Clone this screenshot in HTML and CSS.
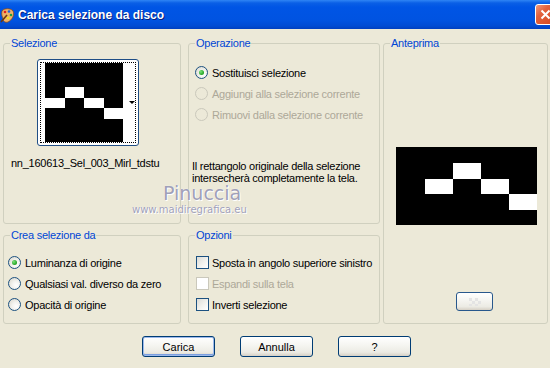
FILE: index.html
```html
<!DOCTYPE html>
<html lang="it">
<head>
  <meta charset="UTF-8">
  <title>Carica selezione da disco</title>
  <link rel="stylesheet" href="styles.css">
</head>
<body>
  <div class="window">
    <div class="titlebar">
      <svg class="app-icon" width="15" height="17" viewBox="0 0 15 17">
        <path d="M2 4 C4 1 11 1 13 4 C15 8 12 13 8 15 C5 16 3 14 3 12 C3 10 1 9 2 4 Z" fill="#f0b36a" stroke="#8a4a1a" stroke-width="0.8"/>
        <circle cx="5" cy="5" r="1.3" fill="#e02020"/>
        <circle cx="9" cy="4.5" r="1.3" fill="#2060e0"/>
        <circle cx="11" cy="8" r="1.3" fill="#20a040"/>
        <circle cx="8" cy="11" r="1.3" fill="#f0e020"/>
        <path d="M1 15 L7 8" stroke="#6a3a10" stroke-width="1.6"/>
      </svg>
      <span class="title">Carica selezione da disco</span>
      <span class="close">
        <svg width="11" height="11" viewBox="0 0 11 11"><path d="M1.5 1.5 L9.5 9.5 M9.5 1.5 L1.5 9.5" stroke="#fff" stroke-width="2"/></svg>
      </span>
    </div>

    <div class="groups">
      <!-- Selezione -->
      <fieldset class="group sel">
        <legend>Selezione</legend>
        <div class="thumb">
          <div class="focus">
            <svg width="78" height="79" viewBox="0 0 78 79">
              <rect width="78" height="79" fill="#000"/>
              <rect x="20" y="24" width="19" height="11" fill="#fff"/>
              <rect x="0" y="35" width="20" height="10" fill="#fff"/>
              <rect x="39" y="35" width="20" height="10" fill="#fff"/>
              <rect x="59" y="45" width="19" height="11" fill="#fff"/>
            </svg>
            <div class="strip"><span class="arrow"></span></div>
          </div>
        </div>
        <div class="filename">nn_160613_Sel_003_Mirl_tdstu</div>
      </fieldset>

      <!-- Operazione -->
      <fieldset class="group op">
        <legend>Operazione</legend>
        <div class="options">
          <div class="row"><span class="radio checked"></span>Sostituisci selezione</div>
          <div class="row disabled"><span class="radio"></span>Aggiungi alla selezione corrente</div>
          <div class="row disabled"><span class="radio"></span>Rimuovi dalla selezione corrente</div>
        </div>
        <p class="note">Il rettangolo originale della selezione intersecherà completamente la tela.</p>
      </fieldset>

      <!-- Anteprima -->
      <fieldset class="group preview">
        <legend>Anteprima</legend>
        <svg class="preview-img" width="141" height="78" viewBox="0 0 141 78">
          <rect width="141" height="78" fill="#000"/>
          <rect x="57" y="16" width="28" height="16" fill="#fff"/>
          <rect x="29" y="32" width="28" height="15" fill="#fff"/>
          <rect x="85" y="32" width="28" height="15" fill="#fff"/>
          <rect x="113" y="47" width="28" height="16" fill="#fff"/>
        </svg>
        <button class="btn small" type="button">
          <svg width="12" height="8" viewBox="0 0 12 8">
            <rect x="0" y="0" width="3" height="3" fill="#e4e4e4"/>
            <rect x="6" y="0" width="3" height="3" fill="#e4e4e4"/>
            <rect x="3" y="3" width="3" height="3" fill="#e4e4e4"/>
            <rect x="9" y="3" width="3" height="3" fill="#e4e4e4"/>
            <rect x="0" y="6" width="3" height="2" fill="#e4e4e4"/>
            <rect x="6" y="6" width="3" height="2" fill="#e4e4e4"/>
          </svg>
        </button>
      </fieldset>

      <!-- Crea selezione da -->
      <fieldset class="group crea">
        <legend>Crea selezione da</legend>
        <div class="options">
          <div class="row"><span class="radio checked"></span>Luminanza di origine</div>
          <div class="row"><span class="radio"></span>Qualsiasi val. diverso da zero</div>
          <div class="row"><span class="radio"></span>Opacità di origine</div>
        </div>
      </fieldset>

      <!-- Opzioni -->
      <fieldset class="group opz">
        <legend>Opzioni</legend>
        <div class="options">
          <div class="row"><span class="check"></span>Sposta in angolo superiore sinistro</div>
          <div class="row disabled"><span class="check"></span>Espandi sulla tela</div>
          <div class="row"><span class="check"></span>Inverti selezione</div>
        </div>
      </fieldset>
    </div>

    <div class="buttons">
      <button class="btn default" type="button">Carica</button>
      <button class="btn" type="button">Annulla</button>
      <button class="btn" type="button">?</button>
    </div>

    <div class="watermark">
      <div class="wm-name">Pinuccia</div>
      <div class="wm-url">www.maidiregrafica.eu</div>
    </div>
  </div>
</body>
</html>
```

FILE: styles.css
```css
body {
  margin: 0;
  padding: 0;
  background-color: #ece9d8;
}
.window {
  position: relative;
  width: 550px;
  height: 368px;
  overflow: hidden;
  background-color: #ece9d8;
  font-family: "Liberation Sans", Arial, sans-serif;
  font-size: 11px;
  letter-spacing: -0.25px;
  color: #000;
}

/* title bar */
.titlebar {
  height: 29px;
  display: flex;
  align-items: center;
  background: linear-gradient(#2f85f5 0, #0a5fe6 3px, #0055e5 7px, #0053e1 20px, #004bd3 26px, #003fbf 29px);
}
.app-icon {
  margin-top: 1px;
}
.title {
  margin-left: 3px;
  font-weight: bold;
  font-size: 12px;
  letter-spacing: 0;
  color: #fff;
  text-shadow: 1px 1px 0 #0a1d7a;
}
.close {
  margin-left: auto;
  margin-right: -6px;
  width: 19px;
  height: 19px;
  border: 1px solid #fff;
  border-radius: 3px;
  background: linear-gradient(135deg, #f19a7e 0, #e2613d 35%, #d3461f 100%);
  display: flex;
  align-items: center;
  justify-content: center;
}

/* group boxes */
.groups {
  display: grid;
  grid-template-columns: 178px 199px 168px;
  grid-template-rows: 187px 95px;
  row-gap: 5px;
  padding: 8px 0 0 3px;
}
.group {
  margin: 0;
  padding: 0;
  border: 1px solid #d0d0bf;
  border-radius: 3px;
  min-width: 0;
}
.group legend {
  margin-left: 6px;
  padding: 0 1px;
  line-height: 13px;
  color: #0046d5;
}
.op, .opz {
  margin-left: 7px;
}
.preview {
  grid-column: 3;
  grid-row: 1 / span 2;
  margin-left: 3px;
}
.crea {
  grid-column: 1;
  grid-row: 2;
}
.opz {
  grid-column: 2;
  grid-row: 2;
}

/* selezione */
.thumb {
  box-sizing: border-box;
  width: 102px;
  height: 87px;
  margin: 9px 0 0 33px;
  padding: 2px;
  border: 1px solid #1f4e85;
  border-radius: 3px;
  background-color: #fff;
}
.focus {
  box-sizing: border-box;
  height: 100%;
  border: 1px dotted #000;
  display: flex;
  padding-left: 4px;
}
.focus svg {
  display: block;
}
.strip {
  flex: 1;
  display: flex;
  align-items: center;
  justify-content: flex-end;
}
.arrow {
  width: 0;
  height: 0;
  border-left: 3px solid transparent;
  border-right: 3px solid transparent;
  border-top: 3px solid #000;
}
.filename {
  width: 153px;
  margin: 11px 0 0 7px;
  line-height: 13px;
  white-space: nowrap;
  overflow: hidden;
}

/* radios and checkboxes */
.options {
  padding-top: 12px;
}
.row {
  height: 21px;
  display: flex;
  align-items: center;
  padding-left: 6px;
}
.row.disabled {
  color: #aca899;
}
.radio {
  box-sizing: border-box;
  width: 13px;
  height: 13px;
  border: 1px solid #1c5180;
  border-radius: 50%;
  background: radial-gradient(circle at 65% 65%, #fff 0, #f2f2ee 40%, #d6d4c8 100%);
  margin-right: 4px;
  display: flex;
  align-items: center;
  justify-content: center;
}
.radio.checked::after {
  content: '';
  width: 5px;
  height: 5px;
  border-radius: 50%;
  background: radial-gradient(circle at 35% 35%, #7be47b 0, #21a121 70%);
}
.disabled .radio {
  border-color: #cac8bb;
  background: none;
}
.check {
  box-sizing: border-box;
  width: 13px;
  height: 13px;
  border: 1px solid #1c5180;
  background: linear-gradient(135deg, #dcdcd7 0, #f4f4f0 60%, #fff 100%);
  margin-right: 3px;
}
.disabled .check {
  border-color: #cac8bb;
  background: #fff;
}
.crea .options,
.opz .options {
  padding-top: 10px;
}
.crea .row {
  padding-left: 4px;
}
.opz .row {
  padding-left: 7px;
}

.note {
  margin: 35px 0 0 3px;
  line-height: 12px;
}

/* anteprima */
.preview-img {
  display: block;
  margin: 97px 0 0 12px;
}

/* buttons */
.btn {
  box-sizing: border-box;
  width: 73px;
  height: 21px;
  padding: 0;
  font-family: "Liberation Sans", Arial, sans-serif;
  font-size: 11px;
  color: #000;
  border: 1px solid #003c74;
  border-radius: 3px;
  background: linear-gradient(#fff 0, #f6f6f2 40%, #ecebe4 80%, #d6d0c5 100%);
}
.btn.default {
  box-shadow: inset 0 0 0 1px #9db9eb, inset 0 -1px 0 1px #7b9fe0;
}
.btn.small {
  display: flex;
  align-items: center;
  justify-content: center;
  width: 37px;
  height: 19px;
  margin: 67px 0 0 72px;
  border-color: #28588c;
}
.buttons {
  display: flex;
  justify-content: center;
  gap: 25px;
  margin-top: 12px;
  padding-left: 3px;
}

/* watermark */
.watermark {
  position: absolute;
  left: 132px;
  top: 183px;
  font-family: "DejaVu Sans", sans-serif;
  color: #9fa0b8;
  text-shadow: 0 0 1px #fff, 1px 1px 0 #fff;
  letter-spacing: 0;
}
.wm-name {
  margin-left: 31px;
  font-size: 19px;
  line-height: 20px;
}
.wm-url {
  font-size: 10px;
  line-height: 13px;
}
```
